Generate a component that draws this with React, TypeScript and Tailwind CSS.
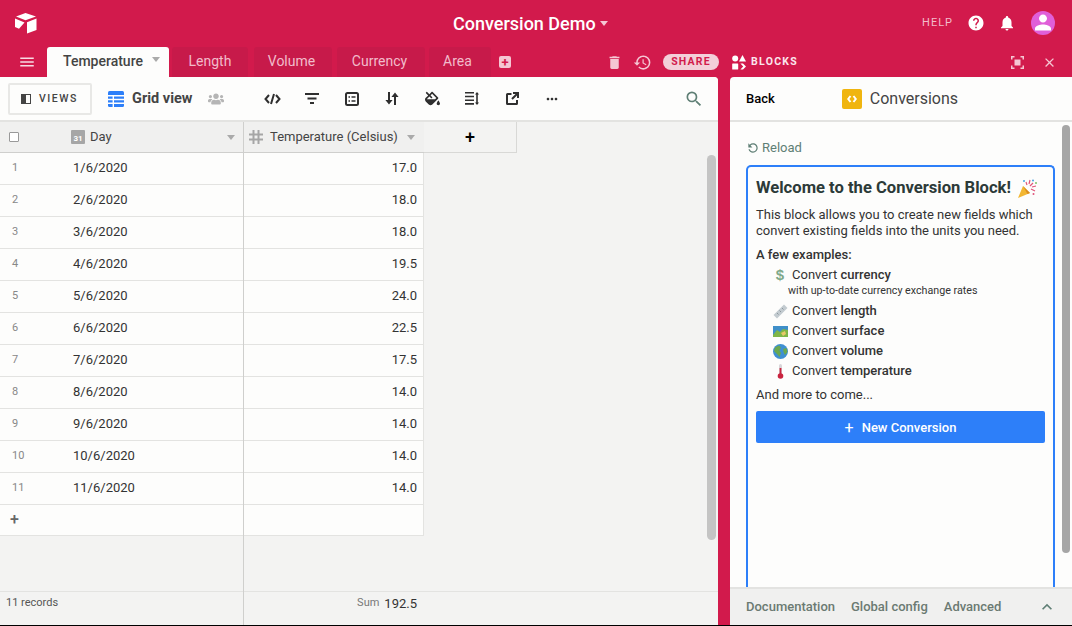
import { ReactNode } from "react";
import {
  MdClose,
  MdDelete,
  MdExpandLess,
  MdHelp,
  MdHistory,
  MdMenu,
  MdMoreHoriz,
  MdNotifications,
  MdPerson,
  MdRefresh,
  MdSearch,
} from "react-icons/md";
import { FaFillDrip, FaUsers } from "react-icons/fa";

const rows = [
  ["1/6/2020", "17.0"],
  ["2/6/2020", "18.0"],
  ["3/6/2020", "18.0"],
  ["4/6/2020", "19.5"],
  ["5/6/2020", "24.0"],
  ["6/6/2020", "22.5"],
  ["7/6/2020", "17.5"],
  ["8/6/2020", "14.0"],
  ["9/6/2020", "14.0"],
  ["10/6/2020", "14.0"],
  ["11/6/2020", "14.0"],
];

function Caret({ className }: { className: string }) {
  return (
    <svg width="8" height="5" viewBox="0 0 8 5" className={className}>
      <path d="M0 0h8L4 5z" fill="currentColor" />
    </svg>
  );
}

function Logo() {
  return (
    <svg width="22" height="21" viewBox="0 0 22 21" fill="#fff">
      <path d="M10.500 0 1 3.400 10.500 7.200 21 3.400z" />
      <path d="M12 9.200v11.300l9.500-3.600V5.400z" />
      <path d="M0 5.600v8.400l4 1.800 5.500-6.200z" />
    </svg>
  );
}

function BlocksIcon() {
  return (
    <svg width="14" height="15" viewBox="0 0 14 15" fill="#fff">
      <circle cx="3.200" cy="3.400" r="3" />
      <path d="M10.500 0 14 6.400H7z" />
      <rect x="0.200" y="8.400" width="6" height="6" rx="0.500" />
      <path d="M8.400 8.400 11 8.400 14 11.400 11 14.600H8.400L11.200 11.400z" />
    </svg>
  );
}

function FocusIcon() {
  return (
    <svg width="13" height="13" viewBox="0 0 13 13" fill="none" stroke="#f5c6d3" strokeWidth="1.500">
      <path d="M.75 3.500V.75H3.500M9.500.75h2.750V3.500M12.250 9.500v2.750H9.500M3.500 12.250H.75V9.500" />
      <rect x="3.500" y="3.500" width="6" height="6" fill="#f5c6d3" stroke="none" />
    </svg>
  );
}

function ToolbarIcon({ children }: { children: ReactNode }) {
  return <div className="flex h-5 w-5 items-center justify-center text-[#2f2f2f]">{children}</div>;
}

function CodeIcon() {
  return (
    <svg width="17" height="12" viewBox="0 0 17 12" fill="none" stroke="currentColor" strokeWidth="2">
      <path d="M5 2 1.500 6 5 10M12 2l3.500 4L12 10M10 1 7 11" />
    </svg>
  );
}

function FilterIcon() {
  return (
    <svg width="14" height="11" viewBox="0 0 14 11" fill="currentColor">
      <rect width="14" height="2" />
      <rect x="2.500" y="4.500" width="9" height="2" />
      <rect x="5" y="9" width="4" height="2" />
    </svg>
  );
}

function GroupIcon() {
  return (
    <svg width="14" height="14" viewBox="0 0 14 14" fill="none" stroke="currentColor" strokeWidth="2">
      <rect x="1" y="1" width="12" height="12" rx="1.500" />
      <path d="M3.500 5h1.500M3.500 9h1.500M6.500 5h4M6.500 9h4" strokeWidth="1.600" />
    </svg>
  );
}

function SortIcon() {
  return (
    <svg width="14" height="13" viewBox="0 0 14 13" fill="currentColor">
      <path d="M3 0h2v8h2.600L4 12.600.400 8H3zM9 13h2V5h2.600L10 .400 6.400 5H9z" />
    </svg>
  );
}

function RowHeightIcon() {
  return (
    <svg width="14" height="13" viewBox="0 0 14 13" fill="currentColor">
      <path d="M0 0h9v1.600H0zM0 3.700h9v1.600H0zM0 7.400h9v1.600H0zM0 11.100h9v1.600H0zM12 0l2 2.600h-1.200v7.800H14L12 13l-2-2.600h1.200V2.600H10z" />
    </svg>
  );
}

function ExpandIcon() {
  return (
    <svg width="13" height="13" viewBox="0 0 13 13" fill="none" stroke="currentColor" strokeWidth="2">
      <path d="M5.500 2H1.500A.500.500 0 0 0 1 2.500v9a.500.500 0 0 0 .500.500h9a.500.500 0 0 0 .500-.500V8" />
      <path d="M7 1h5v5M12 1 6 7" />
    </svg>
  );
}

function GridIcon() {
  return (
    <svg width="16" height="16" viewBox="0 0 16 16">
      <rect width="16" height="16" rx="1.500" fill="#2d7ff9" />
      <path d="M0 4.700h16M0 8.500h16M0 12.300h16M5.300 4.700V16" stroke="#fff" strokeWidth="1.400" />
    </svg>
  );
}

function HashIcon() {
  return (
    <svg width="14" height="14" viewBox="0 0 14 14" fill="none" stroke="#a6a6a6" strokeWidth="2">
      <path d="M4.500 0v14M9.500 0v14M0 4.500h14M0 9.500h14" />
    </svg>
  );
}

function BlockCodeIcon() {
  return (
    <svg width="10" height="8" viewBox="0 0 10 8" fill="none" stroke="#fff" strokeWidth="2">
      <path d="M3.500 1 1.200 4l2.300 3M6.500 1l2.300 3-2.300 3" />
    </svg>
  );
}

function Dollar() {
  return <span className="font-['Liberation_Sans',sans-serif] text-[15px] font-bold text-[#7fa98a]">$</span>;
}

function Ruler() {
  return (
    <svg width="15" height="15" viewBox="0 0 15 15">
      <path d="M11 0.500 14.500 4 4 14.500 0.500 11z" fill="#c3cbd0" />
      <path d="M9 4l1.500 1.500M6.500 6.500 8 8M4 9l1.500 1.500" stroke="#8d989e" />
    </svg>
  );
}

function MapEmoji() {
  return (
    <svg width="15" height="11" viewBox="0 0 15 11">
      <rect width="15" height="11" fill="#3f8fc9" />
      <path d="M0 9 4 4l3 2 3-3 5 1v7H0z" fill="#7fb648" />
      <path d="M8 7l4-2 1 3-3 2z" fill="#e8c96a" />
    </svg>
  );
}

function Globe() {
  return (
    <svg width="15" height="15" viewBox="0 0 15 15">
      <circle cx="7.500" cy="7.500" r="7.500" fill="#3f8fd2" />
      <path d="M2 3.500 6 1.500l2 2-1.500 3L8 9l-1.500 4L4 10 1 7zM10 5l3.500-1 1 4-2.500 3-1.500-3z" fill="#6aa84f" />
    </svg>
  );
}

function Thermometer() {
  return (
    <svg width="9" height="15" viewBox="0 0 9 15">
      <rect x="3" y="0" width="3" height="11" rx="1.500" fill="#d8d5d8" />
      <rect x="3.600" y="4" width="1.800" height="8" fill="#c9243f" />
      <circle cx="4.500" cy="12" r="2.800" fill="#c9243f" />
    </svg>
  );
}

function Party() {
  return (
    <svg width="19" height="19" viewBox="0 0 19 19">
      <path d="M0 19 5 7l7 7z" fill="#f2b632" />
      <path d="M5 7l7 7-2.500 1z" fill="#d98c1f" />
      <path d="M8 3l1 3M12 1l-1 4M15 4l-3 3M18 7l-4 1M17 12l-4-2" stroke="#e0567a" strokeWidth="1.200" />
      <circle cx="6" cy="2" r="1" fill="#4aa3df" />
      <circle cx="15" cy="1.500" r="1" fill="#4aa3df" />
      <circle cx="18" cy="4" r="1" fill="#7cc36a" />
      <circle cx="15.500" cy="15" r="1" fill="#e0567a" />
    </svg>
  );
}

function SheetTab({ label, className }: { label: string; className: string }) {
  return (
    <div className={`flex h-[30px] items-center justify-center rounded-t-[3px] bg-[#c71a4a] pb-[2px] text-[14px] text-[#f2bccb] ${className}`}>
      {label}
    </div>
  );
}

function Example({ icon, name }: { icon: ReactNode; name: string }) {
  return (
    <div className="flex h-5 items-center">
      <div className="mr-[3px] ml-[15px] flex w-[18px] justify-center">{icon}</div>
      <span>
        Convert <span className="font-medium">{name}</span>
      </span>
    </div>
  );
}

export default function App() {
  return (
    <div className="flex h-[626px] w-[1072px] flex-col overflow-hidden border-b border-black bg-[#d21a4c] font-['Roboto',sans-serif] text-[#333]">
      {/* top bar */}
      <div className="flex h-[47px] shrink-0 items-center pr-[17px] pb-[1px] pl-[15px]">
        <Logo />
        <div className="ml-[416px] flex items-center">
          <span className="text-[18px] font-medium text-white">Conversion Demo</span>
          <Caret className="mt-[1px] ml-[4px] text-[#f5c6d3]" />
        </div>
        <div className="flex-1" />
        <span className="text-[11px] tracking-[1px] text-[#f2bccb]">HELP</span>
        <MdHelp className="ml-[14px] text-white" size={18} />
        <MdNotifications className="ml-[13px] text-white" size={18} />
        <div className="ml-[15px] flex h-6 w-6 items-end justify-center overflow-hidden rounded-full bg-[#e05fd8]">
          <MdPerson className="text-white" size={25} />
        </div>
      </div>

      {/* tabs row */}
      <div className="flex h-[30px] shrink-0 items-center">
        <MdMenu className="ml-[18px] text-[#f8dbe3]" size={18} />
        <div className="ml-[11px] flex h-[30px] w-[122px] items-center rounded-t-[3px] bg-[#fdfdfc] pl-4 pb-[2px]">
          <span className="text-[14px] font-medium text-[#444]">Temperature</span>
          <Caret className="mb-[3px] ml-[9px] text-[#aaa]" />
        </div>
        <SheetTab label="Length" className="ml-[3px] w-[76px]" />
        <SheetTab label="Volume" className="ml-[6px] w-[78px] pr-[3px]" />
        <SheetTab label="Currency" className="ml-[5px] w-[88px] pr-[3px]" />
        <SheetTab label="Area" className="ml-[4px] w-[62px] pr-[5px]" />
        <div className="ml-[8px] flex h-3 w-3 items-center justify-center rounded-[2px] bg-[#f5c6d3] text-[13px] leading-none font-bold text-[#d21a4c]">
          +
        </div>
        <MdDelete className="ml-[95px] text-[#f5c6d3]" size={17} />
        <MdHistory className="ml-[10px] text-[#f5c6d3]" size={19} />
        <div className="ml-[11px] flex h-4 w-[56px] items-center justify-center rounded-full bg-[#f3cfd9] text-[10.5px] font-bold tracking-[1.2px] text-[#d21a4c]">
          SHARE
        </div>
        <div className="ml-[13px]">
          <BlocksIcon />
        </div>
        <span className="ml-[5px] text-[10.5px] font-bold tracking-[1.3px] text-[#fbe6ec]">BLOCKS</span>
        <div className="ml-[213px]">
          <FocusIcon />
        </div>
        <MdClose className="ml-[18px] text-[#f5c6d3]" size={15} />
      </div>

      {/* main */}
      <div className="flex min-h-0 flex-1">
        {/* base panel */}
        <div className="flex w-[718px] flex-col overflow-hidden rounded-tr-[4px] bg-[#f3f3f2]">
          <div className="flex h-[45px] shrink-0 items-center border-b-2 border-[#e3e3e1] bg-[#fdfdfc] pl-2">
            <div className="flex h-8 w-[84px] items-center rounded-[2px] border-2 border-[#e8e8e6] pl-[11px]">
              <div className="flex h-[10px] w-[10px] border border-[#444]">
                <div className="w-1/2 bg-[#444]" />
              </div>
              <span className="ml-2 text-[10.5px] font-medium tracking-[1.5px] text-[#444]">VIEWS</span>
            </div>
            <div className="ml-4">
              <GridIcon />
            </div>
            <span className="ml-[8px] text-[14.5px] font-bold text-[#444]">Grid view</span>
            <FaUsers className="ml-[16px] text-[#b5b5b5]" size={16} />
            <div className="ml-[38px] flex w-[300px] justify-between">
              <ToolbarIcon><CodeIcon /></ToolbarIcon>
              <ToolbarIcon><FilterIcon /></ToolbarIcon>
              <ToolbarIcon><GroupIcon /></ToolbarIcon>
              <ToolbarIcon><SortIcon /></ToolbarIcon>
              <ToolbarIcon><FaFillDrip size={15} /></ToolbarIcon>
              <ToolbarIcon><RowHeightIcon /></ToolbarIcon>
              <ToolbarIcon><ExpandIcon /></ToolbarIcon>
              <ToolbarIcon><MdMoreHoriz size={16} /></ToolbarIcon>
            </div>
            <MdSearch className="ml-[122px] text-[#5f7f75]" size={20} />
          </div>

          <div className="relative flex min-h-0 flex-1">
            {/* day column */}
            <div className="flex w-[244px] shrink-0 flex-col border-r border-[#cfcfcd]">
              <div className="flex h-[31px] shrink-0 items-center border-b border-[#cfcfcd] bg-[#f0f0ef] pl-[9px]">
                <div className="h-[10px] w-[10px] rounded-[1px] border border-[#999] bg-white" />
                <div className="ml-[52px] flex h-[14px] w-[14px] items-end justify-center rounded-[1px] bg-[#a6a6a6] text-[8px] leading-[10px] font-bold text-white">
                  31
                </div>
                <span className="ml-[5px] text-[13px] text-[#444]">Day</span>
                <Caret className="mt-[1px] ml-[115px] text-[#aaa]" />
              </div>
              {rows.map(([day], i) => (
                <div key={day} className="flex h-8 shrink-0 items-center border-b border-[#e3e3e1] bg-[#fdfdfc]">
                  <span className="w-[73px] pl-3 text-[11px] text-[#888]">{i + 1}</span>
                  <span className="pb-[1px] text-[13px] text-[#333]">{day}</span>
                </div>
              ))}
              <div className="flex h-[31px] shrink-0 items-center border-b border-[#e3e3e1] bg-[#fdfdfc] pl-[10px] text-[16px] leading-none font-medium text-[#666]">
                +
              </div>
              <div className="flex-1" />
              <div className="flex h-[34px] shrink-0 items-center border-t border-[#e3e3e1] pb-[10px] pl-[6px] text-[11px] text-[#555]">
                11 records
              </div>
            </div>

            {/* temperature column */}
            <div className="flex w-[180px] shrink-0 flex-col">
              <div className="flex h-[31px] shrink-0 items-center border-b border-[#cfcfcd] bg-[#f0f0ef] pl-[5px]">
                <HashIcon />
                <span className="ml-[7px] text-[13px] text-[#444]">Temperature (Celsius)</span>
                <Caret className="mt-[1px] ml-[9px] text-[#aaa]" />
              </div>
              {rows.map(([day, value]) => (
                <div key={day} className="flex h-8 shrink-0 items-center justify-end border-r border-b border-[#e3e3e1] bg-[#fdfdfc] pr-[6px] pb-[1px] text-[13px] text-[#333]">
                  {value}
                </div>
              ))}
              <div className="h-[31px] shrink-0 border-r border-b border-[#e3e3e1] bg-[#fdfdfc]" />
              <div className="flex-1" />
              <div className="flex h-[34px] shrink-0 items-center justify-end border-t border-[#e3e3e1] pr-[7px] pb-[10px]">
                <span className="text-[11px] text-[#777]">Sum</span>
                <span className="ml-[5px] text-[13px] text-[#333]">192.5</span>
              </div>
            </div>

            {/* add field + footer rest */}
            <div className="flex flex-1 flex-col">
              <div className="flex h-[31px] w-[93px] shrink-0 items-center justify-center border-r border-b border-[#d8d8d6] bg-[#f3f3f2] text-[18px] leading-none font-medium text-black">
                +
              </div>
              <div className="flex-1" />
              <div className="h-[34px] shrink-0 border-t border-[#e3e3e1]" />
            </div>

            <div className="absolute top-[33px] left-[707px] h-[385px] w-[9px] rounded-full bg-[#c4c4c4]" />
          </div>
        </div>

        <div className="w-3 shrink-0" />

        {/* block panel */}
        <div className="relative flex min-w-0 flex-1 flex-col overflow-hidden rounded-tl-[4px] bg-[#fdfdfc]">
          <div className="flex h-[45px] shrink-0 items-center border-b-2 border-[#e3e3e1] pl-4">
            <span className="text-[13px] font-medium text-black">Back</span>
            <div className="ml-[67px] flex h-5 w-5 items-center justify-center rounded-[2px] bg-[#f0b50f]">
              <BlockCodeIcon />
            </div>
            <span className="ml-2 text-[16px] text-[#444]">Conversions</span>
          </div>

          <div className="flex min-h-0 flex-1 flex-col overflow-hidden pr-[17px] pl-4">
            <div className="flex h-[43px] shrink-0 items-center pt-[9px] text-[#5f7f75]">
              <MdRefresh size={14} className="-scale-x-100" />
              <span className="ml-[2px] text-[13px]">Reload</span>
            </div>
            <div className="flex-1 rounded-t-[5px] border-2 border-b-0 border-[#2d7ff9] bg-[#fdfdfc] px-2 pt-[11px] text-[13px] text-[#333]">
              <div className="flex h-[21px] items-center text-[16.6px] font-bold whitespace-nowrap text-[#2c3a38]">
                Welcome to the Conversion Block!
                <span className="ml-[7px]"><Party /></span>
              </div>
              <p className="mt-[8px] leading-4">
                This block allows you to create new fields which convert existing fields into the units you need.
              </p>
              <p className="mt-[8px] h-4 leading-4 font-medium">A few examples:</p>
              <div className="mt-[2px]">
                <Example icon={<Dollar />} name="currency" />
                <p className="h-[16px] pl-[32px] text-[10.7px] leading-[12px]">with up-to-date currency exchange rates</p>
                <Example icon={<Ruler />} name="length" />
                <Example icon={<MapEmoji />} name="surface" />
                <Example icon={<Globe />} name="volume" />
                <Example icon={<Thermometer />} name="temperature" />
              </div>
              <p className="mt-[6px] h-4 leading-4">And more to come...</p>
              <button
                type="button"
                className="mt-[8px] flex h-8 w-full items-center justify-center rounded-[2px] bg-[#2d7ff9] pt-[1px] text-[13px] font-medium text-white"
              >
                <span className="mr-2 text-[16px] leading-none font-normal">+</span>
                New Conversion
              </button>
            </div>
          </div>

          <div className="flex h-[38px] shrink-0 items-center border-t-2 border-[#e3e3e1] bg-[#f0f0ef] pr-[15px] pl-4 text-[13px] font-medium text-[#6b7a72]">
            <span>Documentation</span>
            <span className="ml-4">Global config</span>
            <span className="ml-4">Advanced</span>
            <MdExpandLess className="ml-auto text-[#5f7f75]" size={20} />
          </div>

          <div className="absolute top-[48px] left-[332px] h-[428px] w-2 rounded-full bg-[#a6a6a6]" />
        </div>
      </div>
    </div>
  );
}
